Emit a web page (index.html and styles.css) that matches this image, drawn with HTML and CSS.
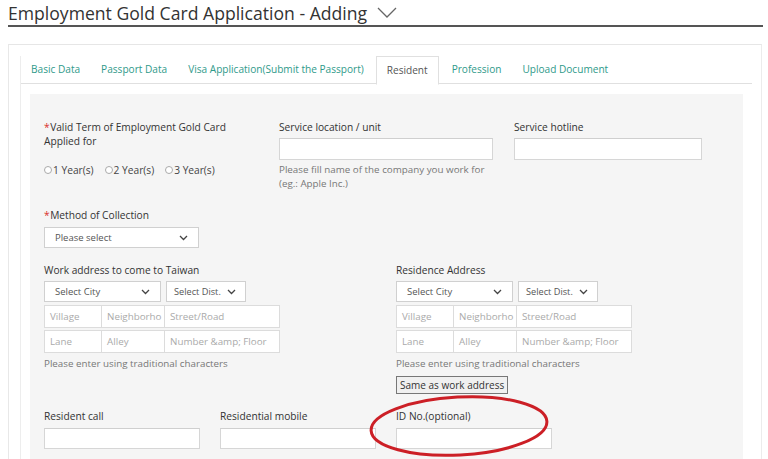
FILE: index.html
```html
<!DOCTYPE html>
<html>
<head>
<meta charset="utf-8">
<link rel="stylesheet" href="styles.css">
</head>
<body>
<div class="page">
  <div class="title">
    <h1>Employment Gold Card Application - Adding</h1>
    <svg class="title-chev" width="20" height="12" viewBox="0 0 20 12"><path d="M1 1 L10 10 L19 1" fill="none" stroke="#666" stroke-width="1.3"/></svg>
  </div>
  <div class="card">
    <div class="card-inner">
      <ul class="tabs">
        <li class="tab">Basic Data</li>
        <li class="tab">Passport Data</li>
        <li class="tab">Visa Application(Submit the Passport)</li>
        <li class="tab active">Resident</li>
        <li class="tab">Profession</li>
        <li class="tab">Upload Document</li>
      </ul>
      <div class="panel">
        <div class="row row1">
          <div class="field f-term">
            <label class="lbl"><span class="req">*</span>Valid Term of Employment Gold Card Applied for</label>
            <div class="radios">
              <span class="radio"><span class="dot"></span>1 Year(s)</span>
              <span class="radio"><span class="dot"></span>2 Year(s)</span>
              <span class="radio"><span class="dot"></span>3 Year(s)</span>
            </div>
          </div>
          <div class="field f-loc">
            <label class="lbl">Service location / unit</label>
            <div class="input w214"></div>
            <div class="help">Please fill name of the company you work for (eg.: Apple Inc.)</div>
          </div>
          <div class="field f-hot">
            <label class="lbl">Service hotline</label>
            <div class="input w188"></div>
          </div>
        </div>

        <div class="row row2">
          <div class="field">
            <label class="lbl"><span class="req">*</span>Method of Collection</label>
            <div class="select w155"><span>Please select</span><svg width="9" height="6" viewBox="0 0 9 6"><path d="M1 1 L4.5 4.5 L8 1" fill="none" stroke="#444" stroke-width="1.3"/></svg></div>
          </div>
        </div>

        <div class="row row3">
          <div class="field addr">
            <label class="lbl">Work address to come to Taiwan</label>
            <div class="sel-line">
              <div class="select w117"><span>Select City</span><svg width="9" height="6" viewBox="0 0 9 6"><path d="M1 1 L4.5 4.5 L8 1" fill="none" stroke="#444" stroke-width="1.3"/></svg></div>
              <div class="select w80"><span>Select Dist.</span><svg width="9" height="6" viewBox="0 0 9 6"><path d="M1 1 L4.5 4.5 L8 1" fill="none" stroke="#444" stroke-width="1.3"/></svg></div>
            </div>
            <div class="in-line">
              <div class="input ph w58">Village</div>
              <div class="input ph w63">Neighborho</div>
              <div class="input ph w115">Street/Road</div>
            </div>
            <div class="in-line">
              <div class="input ph w58">Lane</div>
              <div class="input ph w63">Alley</div>
              <div class="input ph w115">Number &amp;amp; Floor</div>
            </div>
            <div class="help">Please enter using traditional characters</div>
          </div>
          <div class="field addr">
            <label class="lbl">Residence Address</label>
            <div class="sel-line">
              <div class="select w117"><span>Select City</span><svg width="9" height="6" viewBox="0 0 9 6"><path d="M1 1 L4.5 4.5 L8 1" fill="none" stroke="#444" stroke-width="1.3"/></svg></div>
              <div class="select w80"><span>Select Dist.</span><svg width="9" height="6" viewBox="0 0 9 6"><path d="M1 1 L4.5 4.5 L8 1" fill="none" stroke="#444" stroke-width="1.3"/></svg></div>
            </div>
            <div class="in-line">
              <div class="input ph w58">Village</div>
              <div class="input ph w63">Neighborho</div>
              <div class="input ph w115">Street/Road</div>
            </div>
            <div class="in-line">
              <div class="input ph w58">Lane</div>
              <div class="input ph w63">Alley</div>
              <div class="input ph w115">Number &amp;amp; Floor</div>
            </div>
            <div class="help">Please enter using traditional characters</div>
            <button class="btn">Same as work address</button>
          </div>
        </div>

        <div class="row row4">
          <div class="field">
            <label class="lbl">Resident call</label>
            <div class="input w156"></div>
          </div>
          <div class="field">
            <label class="lbl">Residential mobile</label>
            <div class="input w156"></div>
          </div>
          <div class="field">
            <label class="lbl">ID No.(optional)</label>
            <div class="input w156"></div>
          </div>
        </div>
      </div>
    </div>
  </div>
  <svg class="mark" width="190" height="72" viewBox="0 0 190 72"><ellipse cx="95" cy="36" rx="88" ry="29" fill="none" stroke="#cc1f26" stroke-width="3" transform="rotate(-3 95 36)"/></svg>
</div>
</body>
</html>
```

FILE: styles.css
```css
* { box-sizing: border-box; }
html, body { margin: 0; padding: 0; background: #fff; }
body {
  font-family: "Open Sans", "Noto Sans", sans-serif;
  color: #333;
  width: 768px;
  height: 459px;
  overflow: hidden;
}
.page { position: relative; height: 459px; overflow: hidden; }

.title {
  margin: 0 5px 0 8px;
  height: 27px;
  border-bottom: 2px solid #555;
  display: flex;
  align-items: flex-start;
}
.title h1 {
  margin: 0;
  font-weight: 400;
  font-size: 17.6px;
  line-height: 26px;
  color: #333;
}
.title-chev { margin: 7px 0 0 10px; }

.card {
  margin: 17px 6px 0 8px;
  border-top: 1px solid #e6e6e6;
  border-left: 1px solid #e8e8e8;
  border-right: 1px solid #ececec;
  padding: 11px 9px 0 11px;
  height: 420px;
}
.card-inner {
  border-left: 1px solid #ededed;
}
.tabs {
  list-style: none;
  margin: 0;
  padding: 0;
  display: flex;
  border-bottom: 1px solid #e0e0e0;
  height: 28px;
}
.tab {
  font-size: 10.1px;
  color: #2f9a8a;
  padding: 0 10px;
  line-height: 27px;
  white-space: nowrap;
}
.tab + .tab { margin-left: 1px; }
.tab.active {
  color: #555;
  background: #fff;
  border: 1px solid #e0e0e0;
  border-bottom: 1px solid #fff;
  line-height: 26px;
  height: 29px;
  margin-left: 2px;
  margin-right: 2px;
}
.panel {
  margin: 10px 9px 0 9px;
  background: #f5f5f5;
  padding: 26px 14px 0 14px;
  height: 380px;
}
.row { display: flex; }
.field { display: flex; flex-direction: column; flex: none; }
.lbl { font-size: 10.2px; line-height: 14px; color: #333; }
.req { color: #d9312b; margin-right: 0.5px; }
.help { font-size: 9.8px; line-height: 13.5px; color: #777; margin-top: 3px; }

.row1 .f-term { width: 235px; padding-right: 40px; }
.row1 .f-loc { width: 235px; padding-right: 10px; }
.radios { display: flex; margin-top: 15px; font-size: 10.2px; line-height: 14px; color: #444; white-space: nowrap; }
.radio { display: flex; align-items: center; margin-right: 11px; }
.dot { width: 8px; height: 8px; border: 1px solid #aaa; border-radius: 50%; background: #fff; margin-right: 1px; }

.input {
  height: 22px;
  background: #fff;
  border: 1px solid #d6d6d6;
  border-top-color: #cfcfcf;
  margin-top: 4px;
}
.w214 { width: 214px; }
.w188 { width: 188px; }
.w155 { width: 155px; }
.w156 { width: 156px; }
.w117 { width: 117px; }
.w80 { width: 80px; }
.w58 { width: 58px; }
.w63 { width: 63px; }
.w115 { width: 115px; }

.row2 { margin-top: 18px; }
.select {
  height: 21px;
  background: #fff;
  border: 1px solid #d0d0d0;
  margin-top: 5px;
  display: flex;
  align-items: center;
  justify-content: space-between;
  padding: 0 10px;
  font-size: 9.5px;
  color: #555;
  white-space: nowrap;
}
.select.w80 { padding: 0 9px 0 7px; font-size: 9.2px; }
.select svg { flex: none; }

.row3 { margin-top: 15px; }
.addr { width: 352px; }
.sel-line { display: flex; gap: 5px; }
.sel-line .select { margin-top: 4px; }
.in-line { display: flex; margin-top: 2px; }
.sel-line + .in-line { margin-top: 3px; }
.in-line .input {
  margin-top: 0;
  height: 23px;
  font-size: 9.8px;
  color: #aaa;
  line-height: 21px;
  padding-left: 5px;
  white-space: nowrap;
  overflow: hidden;
  border-color: #dcdcdc;
}
.in-line .input + .input { border-left: none; }
.addr .help { margin-top: 4px; }
.btn {
  align-self: flex-start;
  margin-top: 5px;
  height: 18px;
  padding: 0 3px;
  font-family: inherit;
  font-size: 10px;
  color: #333;
  background: #f0f0f0;
  border: 1px solid #777;
  line-height: 16px;
}

.row4 { margin-top: 15px; }
.row4 .field { width: 176px; }
.row4 .input { margin-top: 5px; height: 21px; }

.mark { position: absolute; left: 364px; top: 390px; }
```
